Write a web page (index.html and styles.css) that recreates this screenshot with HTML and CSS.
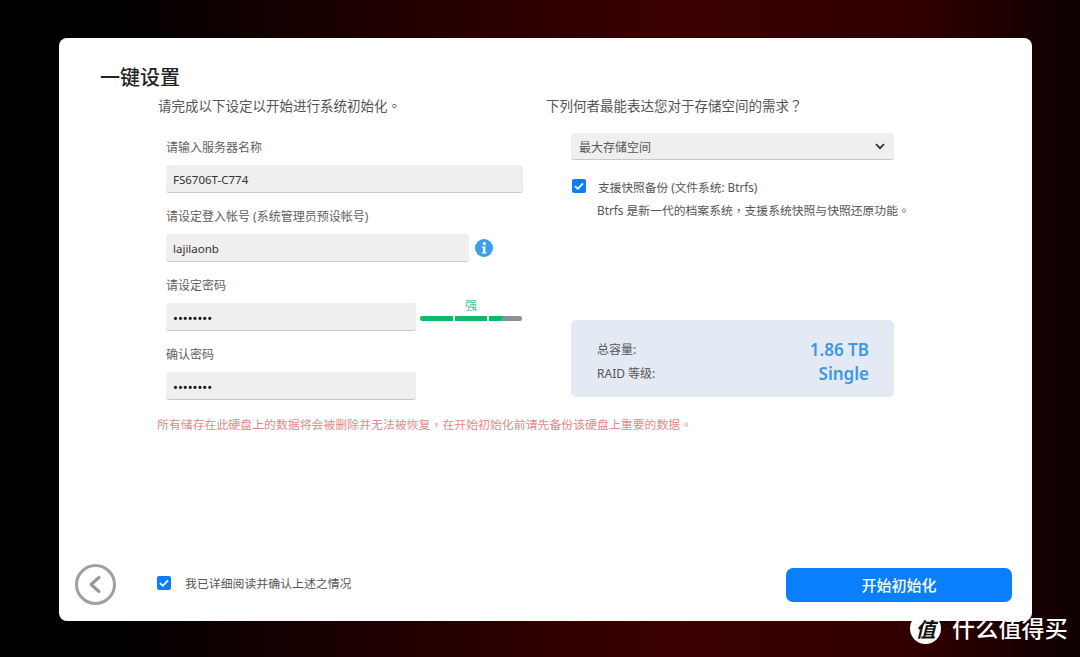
FILE: index.html
```html
<!DOCTYPE html>
<html lang="zh-CN">
<head>
  <meta charset="UTF-8" />
  <title>一键设置</title>
  <link rel="stylesheet" href="styles.css">
</head>
<body>
  <div class="setup-card">
    <h1>一键设置</h1>
    <div class="setup-columns">
      <div class="col-left">
        <p class="col-heading">请完成以下设定以开始进行系统初始化<span class="punct" lang="zh-TW">。</span></p>
        <div class="field first-field">
          <label>请输入服务器名称</label>
          <input class="text-input" type="text" value="FS6706T-C774" />
        </div>
        <div class="field">
          <label>请设定登入帐号 (系统管理员预设帐号)</label>
          <div class="input-row">
            <input class="text-input account-input" type="text" value="lajilaonb" />
            <svg class="info-icon" width="18" height="18" viewBox="0 0 18 18">
              <circle cx="9" cy="9" r="9" fill="#3b9fec"/>
              <circle cx="9.3" cy="4.6" r="1.6" fill="#fff"/>
              <path d="M6.8 7.4h3.6v6h1.2v1.2H6.8v-1.2H8V8.6H6.8z" fill="#fff"/>
            </svg>
          </div>
        </div>
        <div class="field">
          <label>请设定密码</label>
          <div class="input-row">
            <input class="text-input password-input" type="password" value="12345678" />
            <div class="strength">
              <span class="strength-label">强</span>
              <div class="strength-bar">
                <span class="seg"></span>
                <span class="seg"></span>
                <span class="seg seg-partial"></span>
              </div>
            </div>
          </div>
        </div>
        <div class="field">
          <label>确认密码</label>
          <input class="text-input password-input" type="password" value="12345678" />
        </div>
      </div>

      <div class="col-right">
        <p class="col-heading">下列何者最能表达您对于存储空间的需求<span class="punct" lang="zh-TW">？</span></p>
        <div class="select-box">
          <span>最大存储空间</span>
          <svg width="10" height="7" viewBox="0 0 10 7"><path d="M1 1.2l4 4 4-4" fill="none" stroke="#333" stroke-width="1.8"/></svg>
        </div>
        <div class="snapshot-row">
          <span class="checkbox">
            <svg width="14" height="14" viewBox="0 0 14 14"><path d="M3 7.2l2.8 2.6L11 4.4" fill="none" stroke="#fff" stroke-width="1.8"/></svg>
          </span>
          <span>支援快照备份 (文件系统: Btrfs)</span>
        </div>
        <p class="snapshot-desc">Btrfs 是新一代的档案系统<span class="punct" lang="zh-TW">，</span>支援系统快照与快照还原功能<span class="punct" lang="zh-TW">。</span></p>
        <div class="summary">
          <div class="summary-row">
            <span>总容量:</span>
            <span class="summary-value">1.86 TB</span>
          </div>
          <div class="summary-row">
            <span>RAID 等级:</span>
            <span class="summary-value">Single</span>
          </div>
        </div>
      </div>
    </div>
    <p class="warning">所有储存在此硬盘上的数据将会被删除并无法被恢复<span class="punct" lang="zh-TW">，</span>在开始初始化前请先备份该硬盘上重要的数据<span class="punct" lang="zh-TW">。</span></p>

    <div class="setup-footer">
      <svg class="back-button" width="41" height="41" viewBox="0 0 41 41">
        <circle cx="20.5" cy="20.5" r="19" fill="none" stroke="#a0a0a0" stroke-width="3"/>
        <path d="M24 13.5l-8 7 8 7" fill="none" stroke="#969696" stroke-width="3" stroke-linecap="round" stroke-linejoin="round"/>
      </svg>
      <span class="checkbox">
        <svg width="14" height="14" viewBox="0 0 14 14"><path d="M3 7.2l2.8 2.6L11 4.4" fill="none" stroke="#fff" stroke-width="1.8"/></svg>
      </span>
      <span class="confirm-text">我已详细阅读并确认上述之情况</span>
      <button class="start-button">开始初始化</button>
    </div>
  </div>

  <!-- watermark sits over the page corner -->
  <div class="watermark">
    <span class="watermark-logo">值</span>
    <span class="watermark-text">什么值得买</span>
  </div>
</body>
</html>
```

FILE: styles.css
```css
* {
  box-sizing: border-box;
}

body {
  margin: 0;
  width: 1080px;
  height: 657px;
  overflow: hidden;
  position: relative;
  padding: 38px 48px 36px 59px;
  font-family: "Noto Sans", "Noto Sans CJK SC", sans-serif;
  color: #555;
  background: linear-gradient(90deg, #000 10%, #250000 40%, #3b0000 63%, #300000 85%, #0c0000 100%);
}

/* centred punctuation, as in the reference */
.punct {
  font-family: "Noto Sans CJK TC", sans-serif;
  line-height: 0;
}

.setup-card {
  height: 583px;
  display: flex;
  flex-direction: column;
  background: #fff;
  border-radius: 8px;
}

h1 {
  margin: 27px 0 5px 41px;
  font-size: 20px;
  line-height: 26px;
  font-weight: 500;
  color: #222;
}

.setup-columns {
  display: flex;
  padding-left: 99px;
}

.col-left {
  width: 388px;
}

.col-right {
  width: 400px;
}

.col-heading {
  margin: 0;
  font-size: 13.5px;
  line-height: 20px;
  color: #555;
}

.field {
  margin: 0 0 14px 8px;
}

.first-field {
  margin-top: 22px;
}

.field label {
  display: block;
  font-size: 12px;
  line-height: 20px;
  margin-bottom: 7px;
  color: #5f5f5f;
}

.text-input {
  display: block;
  width: 357px;
  height: 28px;
  padding: 2px 7px 0;
  border: none;
  border-bottom: 1px solid #c8c8c8;
  border-radius: 3px;
  background: #efefef;
  font-family: inherit;
  font-size: 11.5px;
  color: #333;
}

.input-row {
  display: flex;
  align-items: center;
}

.account-input {
  width: 303px;
}

.password-input {
  width: 250px;
  font-size: 13px;
  color: #111;
}

.info-icon {
  margin-left: 6px;
}

.strength {
  width: 102px;
  margin-left: 4px;
  margin-top: -17px;
  text-align: center;
}

.strength-label {
  display: block;
  font-size: 12px;
  line-height: 17px;
  color: #45c08d;
}

.strength-bar {
  display: flex;
  gap: 2px;
  margin-top: 2px;
}

.seg {
  flex: 1;
  height: 5px;
  background: #0dba6a;
}

.seg:first-child {
  border-radius: 2px 0 0 2px;
}

.seg-partial {
  border-radius: 0 2px 2px 0;
  background: linear-gradient(90deg, #0dba6a 40%, #8b9298 40%);
}

.select-box {
  display: flex;
  align-items: center;
  justify-content: space-between;
  width: 323px;
  height: 27px;
  margin: 17px 0 0 25px;
  padding: 1px 9px 0 8px;
  border-bottom: 1px solid #c8c8c8;
  border-radius: 3px;
  background: #efefef;
  font-size: 12px;
}

.checkbox {
  flex: none;
  display: flex;
  width: 14px;
  height: 14px;
  border-radius: 2px;
  background: #0a7ffb;
}

.snapshot-row {
  display: flex;
  align-items: center;
  gap: 12px;
  height: 20px;
  margin: 16px 0 0 26px;
  font-size: 11.7px;
}

.snapshot-desc {
  margin: 4px 0 0 51px;
  font-size: 11.8px;
  line-height: 20px;
  white-space: nowrap;
}

.summary {
  display: flex;
  flex-direction: column;
  justify-content: center;
  gap: 1px;
  width: 323px;
  height: 77px;
  margin: 100px 0 0 25px;
  padding: 5px 25px 0 26px;
  border-radius: 5px;
  background: #e3eaf3;
  font-size: 12px;
}

.summary-row {
  display: flex;
  align-items: center;
  justify-content: space-between;
  height: 23px;
}

.summary-value {
  font-size: 17px;
  font-weight: 600;
  color: #3b97e6;
}

.warning {
  margin: 0 0 0 98px;
  font-size: 11.9px;
  line-height: 20px;
  color: #e28a8a;
  white-space: nowrap;
}

.setup-footer {
  display: flex;
  align-items: center;
  margin-top: auto;
  padding: 0 20px 16px 16px;
}

.back-button {
  margin-right: 41px;
}

.setup-footer .checkbox {
  margin-bottom: 3px;
}

.confirm-text {
  margin: 0 0 4px 14px;
  font-size: 11.9px;
}

.start-button {
  width: 226px;
  height: 34px;
  margin-left: auto;
  border: none;
  border-radius: 7px;
  background: #0a7ffb;
  color: #fff;
  font-family: inherit;
  font-size: 15px;
  font-weight: 500;
}

.watermark {
  position: absolute;
  left: 910px;
  top: 613px;
  display: flex;
  align-items: center;
  gap: 11px;
  color: #fff;
}

.watermark-logo {
  display: flex;
  align-items: center;
  justify-content: center;
  width: 31px;
  height: 31px;
  border-radius: 50%;
  background: #fff;
  color: #111;
  font-size: 20px;
  font-weight: 700;
  font-style: italic;
}

.watermark-text {
  font-size: 23px;
  line-height: 31px;
  font-weight: 500;
  letter-spacing: 0.2px;
}
```
